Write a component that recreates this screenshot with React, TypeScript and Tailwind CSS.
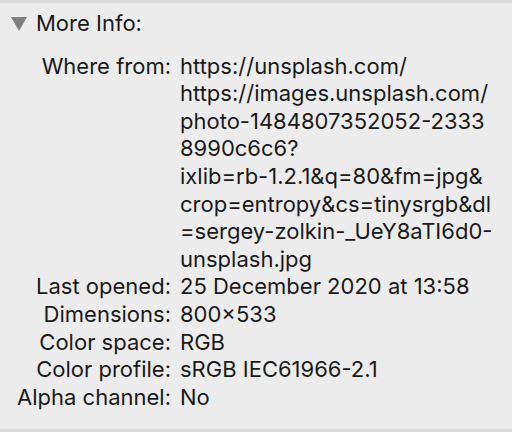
const rows: [string, string[]][] = [
  [
    'Where from:',
    [
      'https://unsplash.com/',
      'https://images.unsplash.com/',
      'photo-1484807352052-2333',
      '8990c6c6?',
      'ixlib=rb-1.2.1&q=80&fm=jpg&',
      'crop=entropy&cs=tinysrgb&dl',
      '=sergey-zolkin-_UeY8aTI6d0-',
      'unsplash.jpg',
    ],
  ],
  ['Last opened:', ['25 December 2020 at 13:58']],
  ['Dimensions:', ['800\u00d7533']],
  ['Color space:', ['RGB']],
  ['Color profile:', ['sRGB IEC61966-2.1']],
  ['Alpha channel:', ['No']],
]

export default function App() {
  return (
    <div
      className="w-[512px] h-[432px] bg-[#ececec] border-t-[3px] border-b-[3px] border-[#dadada] text-[#1a1a1a] text-[22px] leading-[27.6px]"
      style={{ fontFamily: 'Inter, "Helvetica Neue", Arial, sans-serif' }}
    >
      {/* Disclosure header */}
      <div className="flex items-center gap-[9px] pl-[11px] pt-[7px]">
        <svg width="16" height="14" viewBox="0 0 16 14">
          <polygon points="0,0 16,0 8,14" fill="#7f7f7f" />
        </svg>
        <span>More Info:</span>
      </div>

      {/* Info rows */}
      <div className="grid grid-cols-[171px_1fr] gap-x-[9px] pt-[15px]">
        {rows.map(([label, lines]) => (
          <div key={label} className="contents">
            <div className="text-right whitespace-nowrap">{label}</div>
            <div className="whitespace-nowrap">
              {lines.map((l) => (
                <div key={l}>{l}</div>
              ))}
            </div>
          </div>
        ))}
      </div>
    </div>
  )
}
